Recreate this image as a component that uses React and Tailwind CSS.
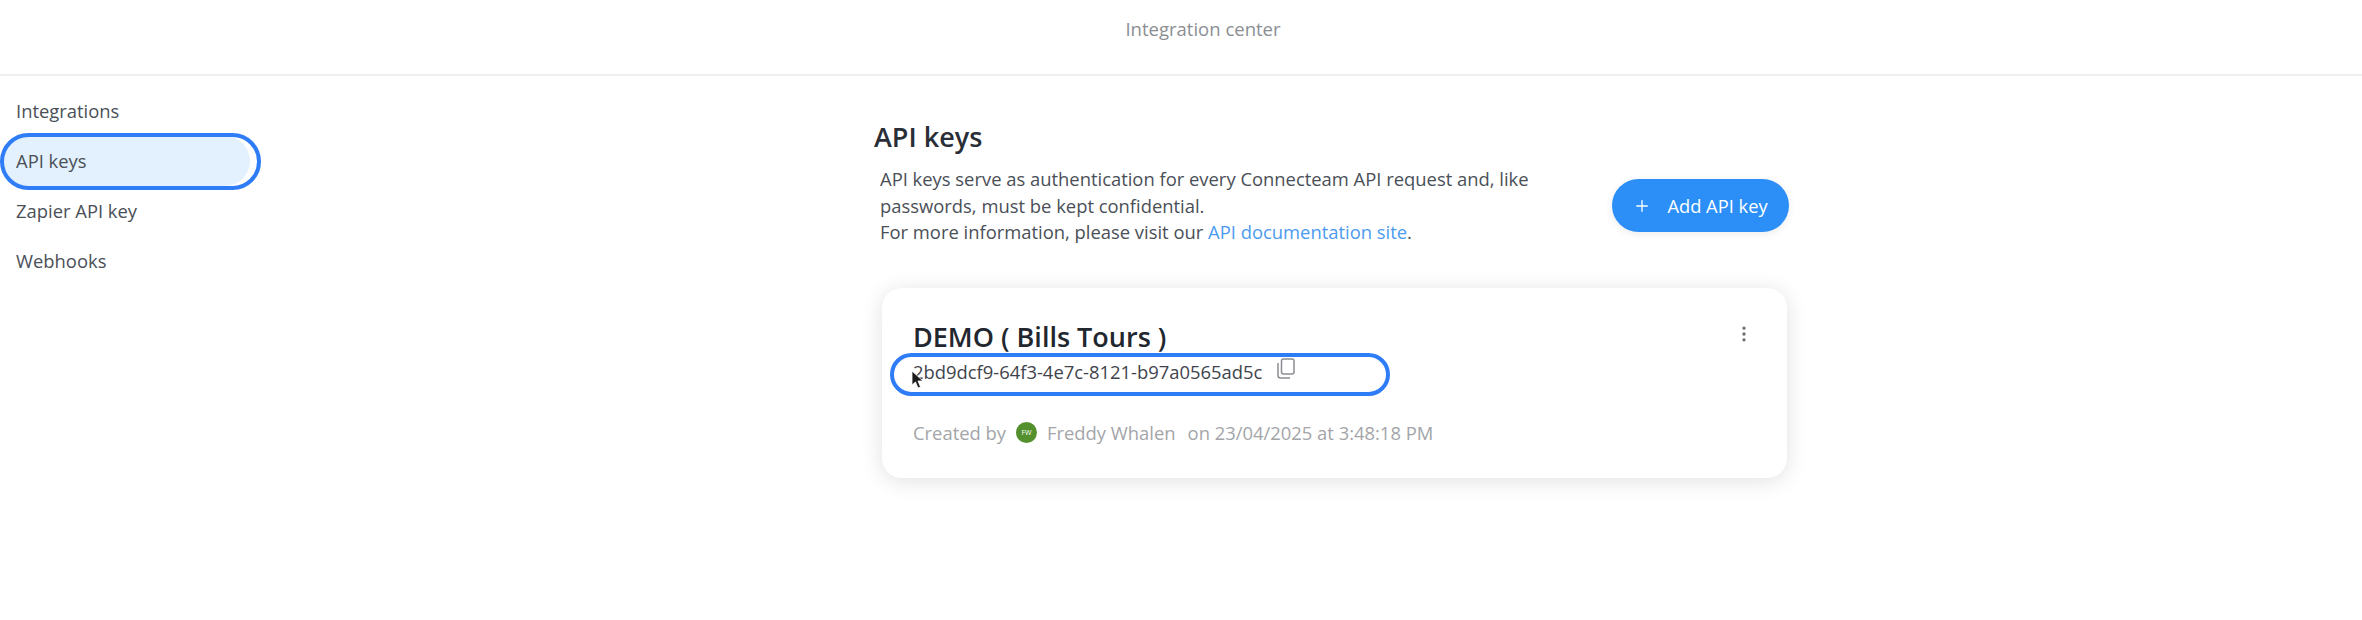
import { EllipsisVertical, Plus } from 'lucide-react';

const navItems = ['Integrations', 'API keys', 'Zapier API key', 'Webhooks'];

const Sidebar = () => (
  <aside className="w-[874px] shrink-0 pt-[10px] pl-[3px]">
    {navItems.map((item) => (
      <div key={item} className="relative h-[50px] flex items-center">
        {item === 'API keys' && (
          <>
            <div className="absolute left-0 top-0 w-[247px] h-[50px] rounded-[25px] bg-[#e2f1fd]" />
            <div className="absolute left-[-3px] top-[-3px] w-[261px] h-[57px] rounded-[29px] border-[4px] border-[#2f7df6]" />
          </>
        )}
        <span className="relative pl-[13px] pb-[1px] text-[18.4px] text-[#4a4f57]">{item}</span>
      </div>
    ))}
  </aside>
);

const CopyIcon = () => (
  <svg className="ml-[14px] mb-[6px] w-[19px] h-[21px] text-[#8a8d92]" viewBox="0 0 19 21" fill="none" stroke="currentColor" strokeWidth="1.5">
    <rect x="5.5" y="1" width="12.5" height="15" rx="2" />
    <path d="M2 5 V17.5 A2.5 2.5 0 0 0 4.5 20 H14" />
  </svg>
);

const KeyCard = () => (
  <div className="relative mt-[42px] ml-[8px] w-[905px] h-[190px] rounded-[20px] bg-white shadow-[0_3px_22px_rgba(0,0,0,0.12)] pl-[31px] pt-[33px]">
    <h2 className="text-[27px] leading-[32px] font-semibold text-[#22262e]">DEMO ( Bills Tours )</h2>
    <div className="relative flex items-center h-[38px]">
      <span className="text-[18.4px] text-[#3f444c]">2bd9dcf9-64f3-4e7c-8121-b97a0565ad5c</span>
      <CopyIcon />
      <div className="absolute left-[-23px] top-0 w-[500px] h-[43px] rounded-[22px] border-[4px] border-[#2f7df6]" />
      <svg className="absolute left-[-2px] top-[17px] w-[14px] h-[20px]" viewBox="0 0 14 20">
        <path d="M1 1 L1 15 L4.5 12 L7 18 L9.5 17 L7 11 L12 11 Z" fill="#1b1b1b" stroke="#fff" strokeWidth="0.8" />
      </svg>
    </div>
    <div className="mt-[29px] flex items-center text-[18.4px] leading-[26px] text-[#a3a5a9]">
      <span>Created by</span>
      <span className="ml-[10px] w-[21px] h-[21px] rounded-full bg-[#55902f] text-white text-[7px] flex items-center justify-center">FW</span>
      <span className="ml-[10px]">Freddy Whalen</span>
      <span className="ml-[12px]">on 23/04/2025 at 3:48:18 PM</span>
    </div>
    <EllipsisVertical className="absolute right-[33px] top-[36px] w-[20px] h-[20px] text-[#6b6f75]" strokeWidth={2} />
  </div>
);

export default function App() {
  return (
    <div className="w-[2362px] h-[620px] overflow-hidden bg-white font-['Open_Sans',sans-serif]">
      <header className="h-[76px] border-b-2 border-[#f0f0f1] flex justify-center pt-[17px] pl-[44px]">
        <span className="text-[18.5px] leading-[24px] text-[#8b8e93]">Integration center</span>
      </header>
      <div className="flex">
        <Sidebar />
        <main className="w-[920px] pt-[44px]">
          <h1 className="text-[27px] leading-[34px] font-semibold text-[#2a2e36]">API keys</h1>
          <div className="mt-[12px] flex items-center">
            <p className="ml-[6px] w-[732px] text-[18.4px] leading-[26.5px] text-[#4a4f57]">
              API keys serve as authentication for every Connecteam API request and, like
              <br />
              passwords, must be kept confidential.
              <br />
              For more information, please visit our <span className="text-[#4c9bf0]">API documentation site</span>.
            </p>
            <button className="w-[177px] h-[53px] rounded-[27px] bg-[#2b8ff7] text-white text-[18.3px] flex items-center justify-center gap-[16px] shadow-[0_2px_8px_rgba(0,0,0,0.08)]">
              <Plus className="w-[18px] h-[18px]" strokeWidth={1.75} />
              Add API key
            </button>
          </div>
          <KeyCard />
        </main>
      </div>
    </div>
  );
}
